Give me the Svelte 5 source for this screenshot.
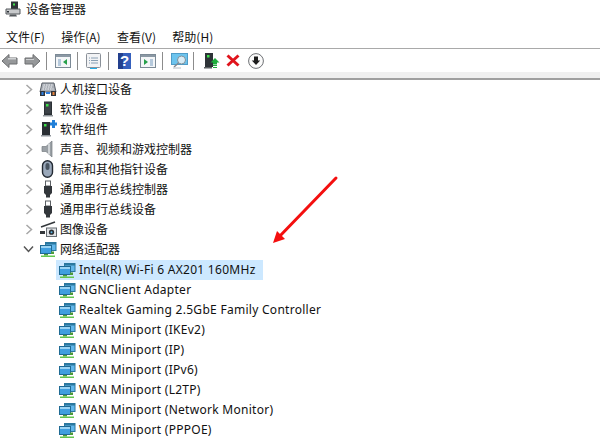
<script>
  const menus = ['文件(F)', '操作(A)', '查看(V)', '帮助(H)'];
  const cats = [
    ['人机接口设备', 'hid'], ['软件设备', 'soft'], ['软件组件', 'comp'],
    ['声音、视频和游戏控制器', 'sound'], ['鼠标和其他指针设备', 'mouse'],
    ['通用串行总线控制器', 'usb'], ['通用串行总线设备', 'usb'], ['图像设备', 'cam']
  ];
  const nets = ['Intel(R) Wi-Fi 6 AX201 160MHz', 'NGNClient Adapter', 'Realtek Gaming 2.5GbE Family Controller',
    'WAN Miniport (IKEv2)', 'WAN Miniport (IP)', 'WAN Miniport (IPv6)', 'WAN Miniport (L2TP)',
    'WAN Miniport (Network Monitor)', 'WAN Miniport (PPPOE)'];
</script>

{#snippet net()}
  <svg class="ico" width="18" height="17" viewBox="0 0 18 17">
    <rect x="6.500" y="1.500" width="10.500" height="8" fill="#62b6ea" stroke="#2b789f"/>
    <path d="M7 2h10v1.500H7z" fill="#2b789f"/>
    <rect x="1.500" y="4.500" width="11" height="8" fill="#3f9fe0" stroke="#1f6a94"/>
    <path d="M2 5h10v2H2z" fill="#9bd4f4"/>
    <path d="M5 13h4v1.500H5z" fill="#4c9a3c"/>
    <path d="M2 14.500h14V16H2z" fill="#63c850"/>
    <path d="M12 10.500h3V13h-3z" fill="#4c9a3c"/>
  </svg>
{/snippet}

{#snippet icon(k)}
  <svg class="ico" width="18" height="18" viewBox="0 0 18 18">
    {#if k === 'hid'}
      <path d="M3 3h12l2 9H1z" fill="#a9aeb6" stroke="#5a6068"/>
      <path d="M4.500 5h9M4 7h10M3.500 9h11" stroke="#eef0f3" stroke-dasharray="1.500 1"/>
      <path d="M1 11h5v5H1zM12 11h5v5h-5z" fill="#2e343c"/>
      <path d="M2.500 12h2v3h-2z" fill="#2f7fe0"/>
      <path d="M13.500 12h2v3h-2z" fill="#e8823a"/>
      <path d="M7 12h4v2H7z" fill="#2f7fe0"/>
    {:else if k === 'soft'}
      <rect x="5" y="1.500" width="8" height="13.500" fill="#2a2f34"/>
      <rect x="6" y="2.500" width="6" height="11" fill="#3c4248"/>
      <rect x="7" y="4" width="2.500" height="2.500" fill="#3ee04a"/>
      <rect x="4" y="15" width="10" height="1.500" fill="#8f959b"/>
    {:else if k === 'comp'}
      <rect x="3" y="2" width="8" height="13" fill="#2a2f34"/>
      <rect x="5" y="4" width="2.500" height="2.500" fill="#3ee04a"/>
      <rect x="2" y="15" width="10" height="1.500" fill="#8f959b"/>
      <path d="M13 0h3v2.500h2v3h-2V8h-3V5.500h-2v-3h2z" fill="#1f7fd8"/>
    {:else if k === 'sound'}
      <path d="M3 6.500h4L13 1v16L7 11.500H3z" fill="#9aa0a5" stroke="#777d82" stroke-width=".7"/>
      <path d="M10 3.500v11" stroke="#cfd3d6" stroke-width="2"/>
    {:else if k === 'mouse'}
      <rect x="3.500" y=".8" width="10" height="16.500" rx="5" fill="#9aa8ba" stroke="#232a33" stroke-width="1.400"/>
      <rect x="6.500" y="3" width="4" height="7" rx="2" fill="#47535f"/>
    {:else if k === 'usb'}
      <rect x="6.500" y="1" width="5" height="5" fill="none" stroke="#5c6064"/>
      <path d="M5 6h8v7l-2 2v2.500H7V15l-2-2z" fill="#33373b"/>
    {:else if k === 'cam'}
      <path d="M2 7 16 2" stroke="#33373b" stroke-width="1.500"/>
      <path d="M1 11h5v3H1z" fill="#33373b"/>
      <rect x="7.500" y="8" width="10" height="8.500" fill="#e0e3e6" stroke="#666c72"/>
      <circle cx="12.500" cy="12.200" r="2.600" fill="#2a2e32"/>
      <circle cx="12.500" cy="12.200" r="1" fill="#59b7e8"/>
    {/if}
  </svg>
{/snippet}

<div class="win">
  <header class="title">
    <svg width="16" height="16" viewBox="0 0 16 16">
      <rect x="6" y="0.500" width="7" height="9" fill="#2e3338"/>
      <rect x="8" y="2.500" width="2" height="2" fill="#3ee04a"/>
      <path d="M1 8h14v5H1z" fill="#c8cacc" stroke="#55595d"/>
      <path d="M5 13.500h6l1 2H4z" fill="#55595d"/>
      <rect x="2" y="10" width="2" height="1.500" fill="#2e3338"/>
    </svg>
    <span>设备管理器</span>
  </header>
  <nav class="menu">
    {#each menus as m}<span>{m}</span>{/each}
  </nav>
  <div class="tools">
    <svg width="17" height="16" viewBox="0 0 17 16"><path d="M8 1.500 1 8l7 6.500V11h8V5H8z" fill="#96989a" stroke="#6c6e70"/><path d="M7 5v1.500h8V5z" fill="#cfd1d3"/></svg>
    <svg class="m6" width="17" height="16" viewBox="0 0 17 16"><path d="M9 1.500 16 8l-7 6.500V11H1V5h8z" fill="#96989a" stroke="#6c6e70"/><path d="M2 6h8v1H2z" fill="#cfd1d3"/></svg>
    <i class="sep m5"></i>
    <svg class="m8" width="16" height="14" viewBox="0 0 16 14"><rect x=".5" y=".5" width="15" height="13" fill="#f4f6f8" stroke="#7c8a96"/><path d="M1 1h14v2H1z" fill="#8b98a4"/><path d="M3 5h3v7H3z" fill="#b5c9dc"/><path d="M12 5v6L8 8z" fill="#27a04a"/></svg>
    <i class="sep m6"></i>
    <svg class="m8" width="15" height="16" viewBox="0 0 15 16"><rect x=".5" y=".5" width="14" height="14" rx="1" fill="#f2f3f5" stroke="#8a9098"/><path d="M5 5h7M5 7.500h7M5 10h7M3 5h1M3 7.500h1M3 10h1" stroke="#8aa0b4"/><path d="M4 15h7v1H4z" fill="#22aeea"/></svg>
    <i class="sep m7"></i>
    <svg class="m9" width="13" height="16" viewBox="0 0 13 16"><rect width="13" height="16" fill="#3560bd"/><path d="M0 0h5v16H0z" fill="#23408e"/><text x="6.500" y="13" class="q">?</text></svg>
    <svg class="m9" width="16" height="14" viewBox="0 0 16 14"><rect x=".5" y=".5" width="15" height="13" fill="#f4f6f8" stroke="#7c8a96"/><path d="M1 1h14v2H1z" fill="#8b98a4"/><path d="M4 5v6l4-3z" fill="#27a04a"/><path d="M10 5h3v7h-3z" fill="#b5c9dc"/></svg>
    <i class="sep m6"></i>
    <svg class="m8" width="17" height="16" viewBox="0 0 17 16"><rect x=".5" y=".5" width="16" height="11" fill="#6cc4ee" stroke="#4f9cc8"/><circle cx="10.500" cy="7" r="4" fill="#d8ecf6" stroke="#80909a"/><path d="M7.500 10 3 14" stroke="#808890" stroke-width="1.500"/><path d="M2 15h8" stroke="#b4bcc4"/></svg>
    <i class="sep m5"></i>
    <svg class="m10" width="16" height="16" viewBox="0 0 16 16"><rect x="1" y="0" width="8" height="14" fill="#2e3338"/><rect x="3" y="2" width="2.500" height="2.500" fill="#3ee04a"/><rect x="0" y="14" width="8" height="1.500" fill="#5a5e62"/><path d="M11 5l4.500 4.500H13v2H9v-2H6.500z" fill="#1dae3c"/><path d="M9 12.500h4M9 14.500h4" stroke="#1dae3c"/></svg>
    <svg class="m6" width="14" height="13" viewBox="0 0 14 13"><path d="M1.500 1.500 12.500 11.500M12.500 1.500 1.500 11.500" stroke="#e0141c" stroke-width="3"/></svg>
    <svg class="m8" width="16" height="16" viewBox="0 0 16 16"><circle cx="8" cy="8" r="7.400" fill="#fbfbfb" stroke="#6e7074"/><path d="M6 3.500h4v4h2.200L8 12 3.800 7.500H6z" fill="#1c1c1c"/></svg>
  </div>
  <div class="band"></div>
  <ul class="tree">
    {#each cats as [label, k]}
      <li class="row">
        <svg class="tw" width="8" height="11" viewBox="0 0 8 11"><path d="M1.500 1 6.500 5.500 1.500 10" fill="none" stroke="#a6a6a6" stroke-width="1.500"/></svg>
        {@render icon(k)}
        <span class="lbl">{label}</span>
      </li>
    {/each}
    <li class="row">
      <svg class="tw open" width="11" height="8" viewBox="0 0 11 8"><path d="M1 1.500 5.500 6.500 10 1.500" fill="none" stroke="#555" stroke-width="1.500"/></svg>
      {@render net()}
      <span class="lbl">网络适配器</span>
    </li>
  </ul>
  <ul class="tree kids">
    {#each nets as n, i}
      <li class="row child">
        <div class="cell" class:sel={i === 0}>
          {@render net()}
          <span class="lbl">{n}</span>
        </div>
      </li>
    {/each}
  </ul>
  <svg class="arrow" width="72" height="72" viewBox="0 0 72 72">
    <path d="M66 3 7 64" stroke="#f40f0f" stroke-width="3" stroke-linecap="round"/>
    <path d="M3 68 7 56 15 64z" fill="#f40f0f"/>
  </svg>
</div>

<style>
  :global(body) { margin: 0; background: #fff; }
  .win { position: relative; width: 600px; height: 440px; overflow: hidden; background: #fff; color: #111;
    font-family: "Noto Sans CJK SC", "Liberation Sans", sans-serif; font-size: 12px; }
  .title { height: 25px; box-sizing: border-box; padding: 1px 0 0 5px; display: flex; align-items: flex-start; gap: 5px; }
  .title span { line-height: 16px; }
  .menu { height: 23px; display: flex; gap: 16.4px; align-items: center; padding: 0 0 0 6px; box-sizing: border-box; }
  .tools { height: 24px; border-top: 1px solid #a9a9a9; box-sizing: border-box; display: flex; align-items: center; padding: 0 0 0 1px; }
  .m5 { margin-left: 5px; } .m6 { margin-left: 6px; } .m7 { margin-left: 7px; }
  .m8 { margin-left: 8px; } .m9 { margin-left: 9px; } .m10 { margin-left: 10px; }
  .sep { width: 1px; height: 18px; background: #8c8c8c; }
  .q { font: bold 15px "Liberation Sans", sans-serif; fill: #fff; text-anchor: middle; }
  .band { height: 6px; background: #f0f0f0; border-bottom: 2px solid #a0a0a0; }
  .tree { list-style: none; margin: -1px 0 0; padding: 0; }
  .tree.kids { margin-top: 1px; }
  .row { height: 20px; display: flex; align-items: center; position: relative; padding-left: 39px; }
  .tw { position: absolute; left: 25px; top: 5px; }
  .tw.open { left: 23px; top: 6px; }
  .ico { flex: none; }
  .lbl { margin-left: 3px; white-space: nowrap; line-height: 18px; }
  .child { padding-left: 56px; }
  .cell { display: flex; align-items: center; height: 20px; padding: 0 7px 0 2px; }
  .cell .lbl { font-family: "Noto Sans", "Liberation Sans", sans-serif; letter-spacing: .28px; }
  .sel { background: #cce8ff; }
  .arrow { position: absolute; left: 270px; top: 175px; }
</style>
